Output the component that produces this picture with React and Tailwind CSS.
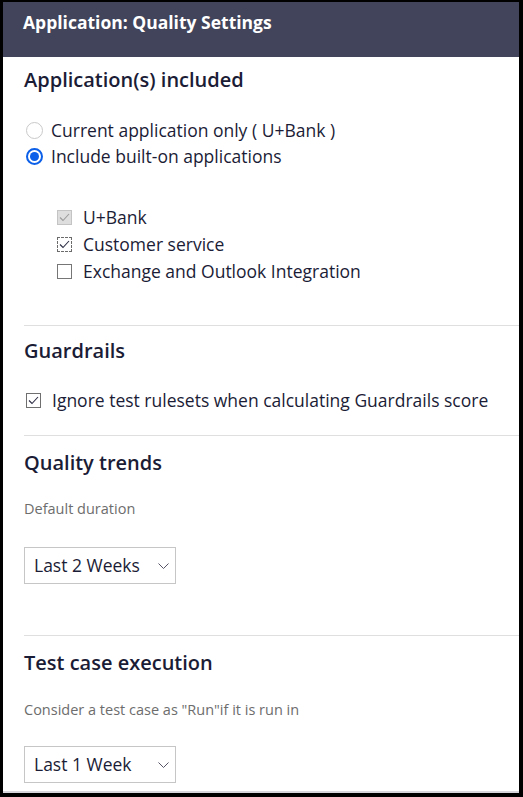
import React from 'react'

function Radio({ checked, label }) {
  return (
    <label className="flex items-center h-[26px] text-[17.5px] leading-[26px] text-[#1b1c36]">
      <span
        className={`w-[17px] h-[17px] rounded-full flex items-center justify-center mr-[8px] ml-[2px] ${
          checked ? 'border-2 border-[#0b5fe8]' : 'border border-[#c9c9c9]'
        }`}
      >
        {checked && <span className="w-[9px] h-[9px] rounded-full bg-[#0b5fe8]" />}
      </span>
      {label}
    </label>
  )
}

function Check({ variant, label }) {
  const box = {
    disabled: 'bg-[#dedede] border border-[#c4c4c4]',
    focus: 'bg-white border border-dashed border-[#6b6b6b]',
    off: 'bg-white border border-[#767676]',
    on: 'bg-white border border-[#6f6f6f]',
  }[variant]
  const tick = variant === 'disabled' ? '#9b9b9b' : '#2b2c44'
  return (
    <label className="flex items-center h-[27px] text-[17.5px] leading-[27px] text-[#1b1c36]">
      <span className={`w-[15px] h-[15px] flex items-center justify-center mr-[11px] ${box}`}>
        {variant !== 'off' && (
          <svg width="11" height="9" viewBox="0 0 11 9" fill="none" stroke={tick} strokeWidth="1.1">
            <path d="M1 4.5 L4 7.5 L10 1" />
          </svg>
        )}
      </span>
      {label}
    </label>
  )
}

function Select({ value }) {
  return (
    <div className="w-[152px] h-[37px] border border-[#c6c6c6] flex items-center justify-between pl-[9px] pr-[6px] text-[17.5px] text-[#1b1c36]">
      <span>{value}</span>
      <svg width="11" height="6" viewBox="0 0 11 6" fill="none" stroke="#555566" strokeWidth="1">
        <path d="M0.5 0.5 L5.5 5.5 L10.5 0.5" />
      </svg>
    </div>
  )
}

function Heading({ children }) {
  return <h2 className="text-[20px] leading-[28px] font-semibold text-[#1b1c36]">{children}</h2>
}

export default function App() {
  return (
    <div
      className="h-[797px] w-[523px] overflow-hidden bg-black"
      style={{ fontFamily: '"Open Sans", "Noto Sans", sans-serif' }}
    >
      <div className="h-[791px] mt-[2px] ml-[3px] mr-[4px] bg-white border-b-2 border-[#d6d6dc] overflow-hidden">
        {/* Header */}
        <div className="h-[55px] bg-[#41445a] pl-[20px] pt-[8px]">
          <h1 className="text-white text-[17.5px] leading-[24px] font-bold">Application: Quality Settings</h1>
        </div>

        <div className="pl-[21px]">
          {/* Applications included */}
          <div className="pt-[9px]">
            <Heading>Application(s) included</Heading>
            <div className="mt-[23px]">
              <Radio label="Current application only ( U+Bank )" />
              <Radio checked label="Include built-on applications" />
            </div>
            <div className="mt-[35px] pl-[33px]">
              <Check variant="disabled" label="U+Bank" />
              <Check variant="focus" label="Customer service" />
              <Check variant="off" label="Exchange and Outlook Integration" />
            </div>
          </div>

          <div className="mt-[40px] border-t border-[#dfdfdf]" />

          {/* Guardrails */}
          <div className="pt-[11px]">
            <Heading>Guardrails</Heading>
            <div className="mt-[22px] pl-[2px]">
              <Check variant="on" label="Ignore test rulesets when calculating Guardrails score" />
            </div>
          </div>

          <div className="mt-[21px] border-t border-[#dfdfdf]" />

          {/* Quality trends */}
          <div className="pt-[13px]">
            <Heading>Quality trends</Heading>
            <p className="mt-[22px] text-[14.5px] leading-[20px] text-[#6d6d6d]">Default duration</p>
            <div className="mt-[28px]">
              <Select value="Last 2 Weeks" />
            </div>
          </div>

          <div className="mt-[51px] border-t border-[#dfdfdf]" />

          {/* Test case execution */}
          <div className="pt-[13px]">
            <Heading>Test case execution</Heading>
            <p className="mt-[23px] text-[14.5px] leading-[20px] text-[#6d6d6d]">
              Consider a test case as "Run"if it is run in
            </p>
            <div className="mt-[26px]">
              <Select value="Last 1 Week" />
            </div>
          </div>
        </div>
      </div>
    </div>
  )
}
